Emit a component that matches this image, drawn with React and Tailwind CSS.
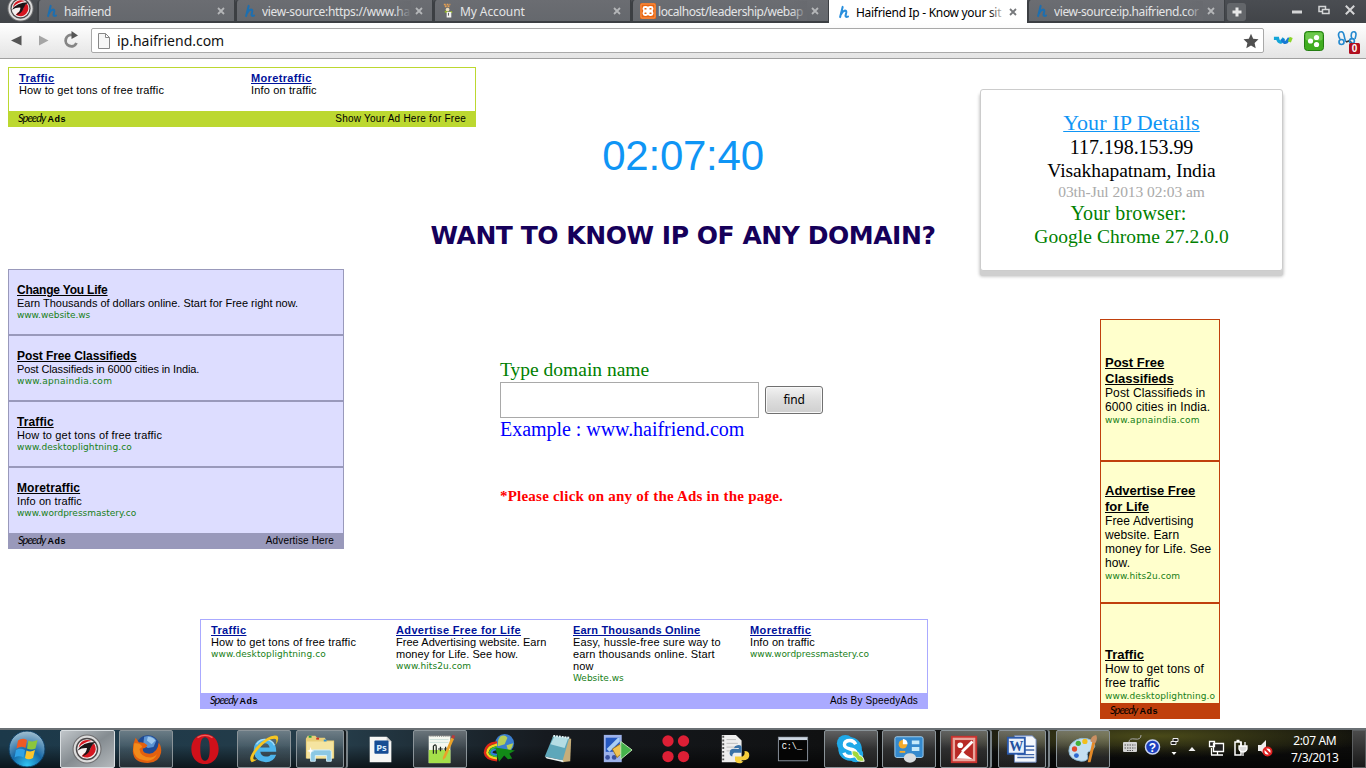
import React from "react";

const H = ({ c = "#1d6fb0" }) => (
  <svg viewBox="0 0 14 14" className="h-[14px] w-[13px] shrink-0" fill="none" stroke={c} strokeWidth="2.200" strokeLinecap="round">
    <path d="M5 1.500 2.300 12.500M3.300 9.500C5 5.500 9.500 4 8.900 7.500L8.100 11Q8.100 12.800 10.800 12" />
  </svg>
);
const Juggler = () => (
  <svg viewBox="0 0 14 16" className="h-4 w-[13px] shrink-0">
    <path d="M2 1h7M3 3h6" stroke="#e8a050" strokeWidth="1.800" strokeDasharray="2 1" />
    <circle cx="6" cy="6.500" r="2" fill="#e9dcbc" />
    <path d="M3 8.500 7 10l4-1" stroke="#95b52a" strokeWidth="2" fill="none" />
    <path d="M5 9h5v6H5z" fill="#f2f2ef" />
    <path d="M7 10v3" stroke="#555" />
  </svg>
);
const Xampp = () => (
  <svg viewBox="0 0 16 16" className="h-4 w-4 shrink-0">
    <rect width="16" height="16" rx="1.500" fill="#e86410" />
    <rect x="1" y="1" width="14" height="14" rx="1" fill="none" stroke="#f79a55" />
    <g fill="none" stroke="#fff" strokeWidth="1.900">
      <rect x="3.500" y="4" width="4" height="3.500" rx="1.500" /><rect x="8.500" y="4" width="4" height="3.500" rx="1.500" />
      <rect x="3.500" y="8.500" width="4" height="3.500" rx="1.500" /><rect x="8.500" y="8.500" width="4" height="3.500" rx="1.500" />
    </g>
    <path d="M6.500 8h3" stroke="#fff" strokeWidth="2" />
  </svg>
);

const Cross = ({ c = "#b4b6b8" }) => (
  <svg viewBox="0 0 8 8" className="h-2 w-2 shrink-0" stroke={c} strokeWidth="1.800">
    <path d="M1 1l6 6M7 1 1 7" />
  </svg>
);

function Tab({ icon, label, active, fade, ls = "tracking-[-0.1px]" }) {
  return (
    <div
      className={
        active
          ? "flex h-[23px] w-[198px] items-center border-l-2 border-white bg-white pl-[7px] pr-[10px] text-black"
          : "flex h-[23px] w-[198px] items-center rounded-tl-sm border-b-2 border-l-2 border-r border-[#3c3f43] bg-gradient-to-b from-[#6b6d72] to-[#65686d] pl-[7px] pr-[9px] text-[#e4e5e6]"
      }
    >
      <div className="flex w-[18px] shrink-0 items-center pt-px">{icon}</div>
      <div className={"relative min-w-0 flex-1 overflow-hidden whitespace-nowrap pt-[2px] text-[12px] leading-[18px] " + ls}>
        {label}
        {fade && (
          <div
            className={
              active
                ? "absolute right-0 top-0 h-full w-4 bg-gradient-to-r from-transparent to-white"
                : "absolute right-0 top-0 h-full w-4 bg-gradient-to-r from-transparent to-[#686a6f]"
            }
          />
        )}
      </div>
      <div className="ml-[4px] flex pt-px">
        <Cross c={active ? "#77797c" : "#b4b6b8"} />
      </div>
    </div>
  );
}

const Dragon = ({ cls }) => (
  <svg viewBox="0 0 32 32" className={cls}>
    <circle cx="16" cy="16" r="15.500" fill="#6e6e70" />
    <circle cx="16" cy="16" r="14.300" fill="#dcdcdc" />
    <circle cx="16" cy="16" r="12" fill="#4a4648" />
    <circle cx="16" cy="16" r="10.500" fill="#f4efef" />
    <path d="M23.500 10a9.500 9.500 0 0 1-13 13.500l2-2.500Q20 19 20 13z" fill="#d5151f" />
    <path d="M7 14.500a9.500 9.500 0 0 1 14-7Q13 8 7 14.500z" fill="#d5151f" />
    <path d="M6 17.500Q11 8.500 25.500 8.500 21 11 19.500 16q-2 6-9 8 5-4 5.500-9-5-.5-10 2.500z" fill="#1c1416" />
  </svg>
);

function TabStrip() {
  return (
    <div className="flex h-[23px] bg-gradient-to-b from-[#4a4d52] to-[#414448] font-['Noto_Sans',sans-serif]">
      <div className="flex w-[37px] items-start overflow-hidden pl-[7px]">
        <Dragon cls="-mt-[5px] h-[27px] w-[27px] shrink-0" />
      </div>
      <Tab icon={<H />} label="haifriend" ls="tracking-[-0.45px]" />
      <Tab icon={<H />} label="view-source:https://www.ha" ls="tracking-[-0.33px]" fade />
      <Tab icon={<Juggler />} label="My Account" />
      <Tab icon={<Xampp />} label="localhost/leadership/webap" ls="tracking-[-0.45px]" fade />
      <Tab icon={<H c="#2a8fdc" />} label="Haifriend Ip - Know your sit" ls="tracking-[-0.3px]" active fade />
      <Tab icon={<H />} label="view-source:ip.haifriend.cor" ls="tracking-[-0.4px]" fade />
      <div className="ml-[2px] mt-[3px] flex h-[18px] w-[19px] items-center justify-center rounded-[3px] bg-[#63666a]">
        <svg viewBox="0 0 10 10" className="h-[10px] w-[10px]" stroke="#e8e8e8" strokeWidth="3"><path d="M5 .5v9M.5 5h9" /></svg>
      </div>
      <div className="ml-auto flex h-[20px] items-center gap-[15px] pr-[11px] text-[#cfd0d1]">
        <svg viewBox="0 0 12 10" className="h-[10px] w-[12px]"><path d="M1 7h10" stroke="#d4d5d6" strokeWidth="3" /></svg>
        <svg viewBox="0 0 12 10" className="h-[10px] w-[12px]" fill="none" stroke="#d4d5d6" strokeWidth="1.500">
          <path d="M4 6.500H1v-5h6.500V4" /><path d="M4.500 4.500H11v4H4.500z" />
        </svg>
        <svg viewBox="0 0 10 10" className="h-[10px] w-[10px]" stroke="#d4d5d6" strokeWidth="2"><path d="M.8.8l8.400 8.400M9.200.8.8 9.200" /></svg>
      </div>
    </div>
  );
}

function Toolbar() {
  return (
    <div className="flex h-[36px] items-center border-b border-[#a0a0a0] bg-gradient-to-b from-white to-[#e4e4e4] pr-1">
      <svg viewBox="0 0 91 30" className="h-[30px] w-[91px] shrink-0">
        <path d="M11 14.500 21.500 9.500v10z" fill="#555" />
        <path d="M39 9.500v10l9.500-5z" fill="#a5a5a5" />
        <path d="M72.500 9A5.700 5.700 0 1 0 76.500 17" fill="none" stroke="#858585" strokeWidth="2.800" />
        <path d="M71.500 5v8l6.500-3.500z" fill="#555" />
      </svg>
      <div className="flex h-[25px] w-[1173px] items-center rounded-[2px] border border-[#a9a9a9] bg-white pl-[6px] pr-[4px]">
        <svg viewBox="0 0 12 16" className="h-4 w-3 shrink-0" fill="#f6f6f6" stroke="#888">
          <path d="M.5.500h7l4 4v11H.5zM7.500.500v4h4" />
        </svg>
        <div className="ml-[7px] flex-1 font-['Noto_Sans',sans-serif] text-[14px] leading-5 tracking-[-0.020px] text-[#111]">ip.haifriend.com</div>
        <svg viewBox="0 0 16 16" className="h-4 w-4" fill="#505050">
          <path d="M8 .8l2.200 4.900 5.300.6-3.900 3.600 1.100 5.300L8 12.500l-4.700 2.700 1.100-5.300L.5 6.300l5.300-.6z" />
        </svg>
      </div>
      <svg viewBox="0 0 22 12" className="ml-[9px] h-3 w-5" fill="none" strokeWidth="3.600">
        <path d="M1 3h4q1 5 4 4l3-4" stroke="#14a5d8" /><path d="M10 4q2 5 5 3l3-4" stroke="#1778d4" /><path d="M18 7l2-5" stroke="#8bd628" />
      </svg>
      <svg viewBox="0 0 20 20" className="ml-[11px] h-5 w-5">
        <rect x=".5" y=".5" width="19" height="19" rx="3" fill="#40ad20" stroke="#237d11" />
        <rect x="1.500" y="1.500" width="17" height="8" rx="2" fill="#6cc84c" />
        <circle cx="6.500" cy="10" r="2.600" fill="#fff" /><circle cx="12.500" cy="6.500" r="2.600" fill="#fff" /><circle cx="12.500" cy="13.500" r="2.600" fill="#fff" />
      </svg>
      <svg viewBox="0 0 24 24" className="ml-[12px] mt-[3px] h-6 w-6 shrink-0">
        <g fill="none" stroke="#2489cf" strokeWidth="1.600">
          <path d="M4 9C1 4 3 1.500 5.500 1.700 9 2 7 6 10 12M16 9c-2-5 0-7.500 2-7.300C21 2 20 6 19 9" />
          <circle cx="5.500" cy="12" r="2.500" /><path d="M10 12l3-1 3 2" stroke="#333" /><circle cx="16" cy="11" r="2.400" />
        </g>
        <rect x="13" y="13" width="11" height="11" rx="1.500" fill="#b10e1e" />
        <text x="18.500" y="22" textAnchor="middle" fontSize="10" fontWeight="bold" fill="#fff" fontFamily="Liberation Sans">0</text>
      </svg>
    </div>
  );
}

const SpeedyLogo = () => (
  <div className="flex items-baseline text-black">
    <span className="font-['Lato',sans-serif] text-[11px] italic leading-[14px] tracking-[-0.9px]">Speedy</span>
    <span className="ml-[2px] font-['Liberation_Sans',sans-serif] text-[9px] font-black leading-[14px] tracking-[0.5px]">Ads</span>
  </div>
);

const Url = ({ children, ls = "" }) => (
  <div className={"whitespace-nowrap font-['DejaVu_Sans',sans-serif] text-[9px] leading-[12px] text-[#178017] " + ls}>{children}</div>
);

function TopAd() {
  return (
    <div className="flex h-[60px] w-[468px] flex-col border border-[#bcd830] bg-white text-[11px] leading-[12px]">
      <div className="flex flex-1 pl-[10px] pt-[4px]">
        <div className="w-[232px]">
          <div className="font-bold text-[#00129b] underline tracking-[0.35px]">Traffic</div>
          <div className="tracking-[0.15px]">How to get tons of free traffic</div>
        </div>
        <div>
          <div className="font-bold text-[#00129b] underline tracking-[0.35px]">Moretraffic</div>
          <div className="tracking-[0.15px]">Info on traffic</div>
        </div>
      </div>
      <div className="flex h-[15px] items-center justify-between bg-[#bcd830] pl-[9px] pr-[9px] text-[10px]">
        <SpeedyLogo />
        <span className="tracking-[0.24px]">Show Your Ad Here for Free</span>
      </div>
    </div>
  );
}

const leftAds = [
  ["Change You Life", "tracking-[-0.2px]", "Earn Thousands of dollars online. Start for Free right now.", "tracking-[-0.010px]", "www.website.ws", "tracking-[-0.050px]"],
  ["Post Free Classifieds", "tracking-[-0.080px]", "Post Classifieds in 6000 cities in India.", "tracking-[-0.12px]", "www.apnaindia.com", "tracking-[0.27px]"],
  ["Traffic", "tracking-[0.1px]", "How to get tons of free traffic", "tracking-[0.15px]", "www.desktoplightning.co", "tracking-[0.080px]"],
  ["Moretraffic", "tracking-[0.1px]", "Info on traffic", "tracking-[0.1px]", "www.wordpressmastery.co", "tracking-[-0.010px]"],
];

function LeftAd() {
  return (
    <div className="flex h-[280px] w-[336px] flex-col border border-[#9999bb] bg-[#ddddff]">
      {leftAds.map(([t, tl, b, bl, u, ul], i) => (
        <div key={t} className={i < 3 ? "h-[66px] border-b-2 border-[#9999bb] pl-2 pt-[13px]" : "flex-1 pl-2 pt-[13px]"}>
          <div className={"text-[12px] font-bold leading-[14px] underline " + tl}>{t}</div>
          <div className={"text-[11px] leading-[12px] " + bl}>{b}</div>
          <Url ls={ul}>{u}</Url>
        </div>
      ))}
      <div className="flex h-[15px] items-center justify-between bg-[#9999bb] pl-[9px] pr-[9px] text-[10px]">
        <SpeedyLogo />
        <span className="tracking-[0.15px]">Advertise Here</span>
      </div>
    </div>
  );
}

const bottomAds = [
  ["w-[185px]", "Traffic", "tracking-[0.35px]", ["How to get tons of free traffic"], "tracking-[0.15px]", "www.desktoplightning.co", "tracking-[0.080px]"],
  ["w-[177px]", "Advertise Free for Life", "tracking-[0.36px]", ["Free Advertising website. Earn", "money for Life. See how."], "tracking-[0.040px]", "www.hits2u.com", "tracking-[0.080px]"],
  ["w-[177px]", "Earn Thousands Online", "tracking-[0.18px]", ["Easy, hussle-free sure way to", "earn thousands online. Start", "now"], "tracking-[0.15px]", "Website.ws", ""],
  ["w-[170px]", "Moretraffic", "tracking-[0.4px]", ["Info on traffic"], "tracking-[0.1px]", "www.wordpressmastery.co", "tracking-[-0.020px]"],
];

function BottomAd() {
  return (
    <div className="flex h-[90px] w-[728px] flex-col border border-[#aaaaff] bg-white text-[11px] leading-[12px]">
      <div className="flex flex-1 pl-[10px] pt-[4px]">
        {bottomAds.map(([w, t, tl, b, bl, u, ul]) => (
          <div key={t} className={w}>
            <div className={"font-bold text-[#00129b] underline " + tl}>{t}</div>
            {b.map((l) => <div key={l} className={"whitespace-nowrap " + bl}>{l}</div>)}
            <Url ls={ul}>{u}</Url>
          </div>
        ))}
      </div>
      <div className="flex h-[15px] items-center justify-between bg-[#aaaaff] pl-[9px] pr-[9px] text-[10px]">
        <SpeedyLogo />
        <span className="tracking-[0.15px]">Ads By SpeedyAds</span>
      </div>
    </div>
  );
}

const rightAds = [
  ["h-[142px] border-b-2 pt-[35px]", ["Post Free", "Classifieds"], ["Post Classifieds in", "6000 cities in India."], "www.apnaindia.com", "tracking-[0.25px]"],
  ["h-[142px] border-b-2 pt-[21px]", ["Advertise Free", "for Life"], ["Free Advertising", "website. Earn", "money for Life. See", "how."], "www.hits2u.com", "tracking-[0.080px]"],
  ["flex-1 pt-[43px]", ["Traffic"], ["How to get tons of", "free traffic"], "www.desktoplightning.o", "tracking-[0.1px]"],
];

function RightAd() {
  return (
    <div className="flex h-[400px] w-[120px] flex-col border border-[#c0400c] bg-[#ffffcc]">
      {rightAds.map(([c, t, b, u, ul]) => (
        <div key={u} className={"border-[#c0400c] pl-1 " + c}>
          {t.map((l) => <div key={l} className="text-[13px] font-bold leading-4 underline">{l}</div>)}
          <div className="-mt-px">
            {b.map((l) => <div key={l} className="whitespace-nowrap text-[12px] leading-[14px] tracking-[0.12px]">{l}</div>)}
            <Url ls={ul}>{u}</Url>
          </div>
        </div>
      ))}
      <div className="flex h-[15px] items-center bg-[#c0400c] pl-[9px]"><SpeedyLogo /></div>
    </div>
  );
}

function IpCard() {
  return (
    <div className="h-[182px] w-[303px] rounded-[3px] border border-[#cccccc] bg-white pt-[20px] text-center font-['Liberation_Serif',serif] text-[20px] leading-[23px] text-black shadow-[0_5px_0_#cfcfcf,0_5px_3px_1px_#cccccc]">
      <div className="text-[22px] leading-[25px] tracking-[0.1px] text-[#0f95f5] underline decoration-1">Your IP Details</div>
      <div className="pt-px tracking-[-0.050px]">117.198.153.99</div>
      <div className="text-[19.5px] tracking-[-0.080px]">Visakhapatnam, India</div>
      <div className="text-[15.5px] leading-[20px] tracking-[-0.050px] text-[#aaaaaa]">03th-Jul 2013 02:03 am</div>
      <div className="pr-[6px] tracking-[0.15px] text-[#008000]">Your browser:</div>
      <div className="text-[19.5px] tracking-[0.050px] text-[#008000]">Google Chrome 27.2.0.0</div>
    </div>
  );
}

function Page() {
  return (
    <div className="flex h-[669px] overflow-hidden bg-white font-['Liberation_Sans',sans-serif] text-black">
      <div className="w-[970px] shrink-0 pl-2 pt-2">
        <TopAd />
        <div className="flex h-[142px] flex-col items-center pl-[388px]">
          <div className="mt-[5px] text-[42px] leading-[48px] tracking-[-0.25px] text-[#0f95f5]">02:07:40</div>
          <h1 className="mt-[41px] whitespace-nowrap font-['DejaVu_Sans',sans-serif] text-[25px] font-bold leading-[30px] tracking-[-0.46px] text-[#16005a]">WANT TO KNOW IP OF ANY DOMAIN?</h1>
        </div>
        <div className="flex h-[350px]">
          <LeftAd />
          <div className="ml-[156px] pt-[88px] font-['Liberation_Serif',serif] text-[20px] leading-[24px]">
            <div className="pt-px text-[19.5px] leading-[23px] text-[#008000]">Type domain name</div>
            <div className="mt-px flex h-[36px] items-center gap-[6px]">
              <input className="h-[36px] w-[259px] border border-[#a9a9a9] bg-white px-2" />
              <button className="h-[28px] w-[58px] rounded-[3px] border border-[#707070] bg-gradient-to-b from-[#f2f2f2] via-[#dddddd] to-[#cfcfcf] font-['Noto_Sans',sans-serif] text-[12px] leading-5 tracking-[-0.2px] shadow-[inset_0_0_0_1px_#f8f8f8]">find</button>
            </div>
            <div className="-mt-px tracking-[-0.040px] text-[#0000ff]">Example : www.haifriend.com</div>
            <div className="mt-[43px] text-[15px] font-bold tracking-[0.22px] text-[#ff0000]">*Please click on any of the Ads in the page.</div>
          </div>
        </div>
        <div className="pl-[192px]"><BottomAd /></div>
      </div>
      <div className="flex flex-col pl-[10px] pt-[30px]">
        <IpCard />
        <div className="pl-[120px] pt-[48px]"><RightAd /></div>
      </div>
    </div>
  );
}

const S = ({ children }) => <svg viewBox="0 0 34 34" className="h-[32px] w-[32px]">{children}</svg>;

const apps = [
  { b: "hot", i: <Dragon cls="h-[30px] w-[30px]" /> },
  { b: "on", i: <S>
    <circle cx="19" cy="15" r="12.500" fill="#1f4a94" /><path d="M15 4q8-3 13 4l-3 7-6 1-5-3z" fill="#5b93d2" /><path d="M19 4q5 0 8 4l-4 4-5-4z" fill="#9cc6ec" />
    <path d="M3.500 12 6 5l3.500 5q5-1 9 3-2 3.500-5 3.500 0 5.500 7 5.500 9-1 10-12 3.500 5 2.500 11-2 10.500-14 11Q4 32 3 20z" fill="#e2600f" />
    <path d="M4.500 11q7-1 8.500 4l-3 2q1 9 12 9 5-1 7-4-4 9-14 7Q5 28 3.500 18z" fill="#f28a1a" /></S> },
  { b: "", i: <S><path fillRule="evenodd" fill="#d0101a" d="M17 1C8 1 2.500 8 2.500 17S8 33 17 33s14.500-7 14.500-16S26 1 17 1zm0 3.500c4 0 5 6 5 12.500s-1 12.500-5 12.500-5-6-5-12.500 1-12.500 5-12.500z" /><path d="M9 5q8-5 16 0" stroke="#f0605c" strokeWidth="1.500" fill="none" /></S> },
  { b: "on", i: <S>
    <path fillRule="evenodd" d="M30 20H13q1 5 6 5 4 0 5-2h6q-3 8-11 8Q6 30 6 18 7 6 18 6q12 1 12 14zM13 15.500h10q-1-4.500-5-4.500t-5 4.500z" fill="#4db5ec" /><path d="M9 12q4-6 11-5 6 1 8 6" stroke="#a5dcf8" strokeWidth="1.500" fill="none" />
    <path d="M4 31Q-1 27 9 15 22 1 31 3q3 3-2 10 3-7-1-7-7 0-16 10-8 9-6 12 1 1 4 0-4 3-6 3z" fill="#f6c522" /></S> },
  { b: "stack", i: <S>
    <path d="M2 6 4 3h8l2 2h8l2 3h8v19H2z" fill="#e9cf78" /><path d="M3 9h28v18H3z" fill="#f5e4a0" /><path d="M5 4h3" stroke="#20a040" strokeWidth="2" /><path d="M13 6h3" stroke="#d03020" strokeWidth="2" /><path d="M21 8h3" stroke="#3090d0" strokeWidth="2" />
    <path d="M7 30V20q0-2 2-2h18q2 0 2 2v10h-5v-6H12v6z" fill="#8cc8e4" stroke="#d8f0fa" /><path d="M7 15l1 3 3 1-3 1-1 3-1-3-3-1 3-1z" fill="#fff" /></S> },
  { b: "", i: <S>
    <path d="M5 4h18l5 5v22H5z" fill="#f7f7f5" /><path d="M23 4v5h5" fill="#c9c9c9" /><rect x="10" y="8" width="15" height="14" rx="1" fill="#174d94" />
    <text x="17.500" y="19" fontSize="10" fill="#d9ecff" textAnchor="middle" fontFamily="Noto Sans" fontWeight="bold">Ps</text></S> },
  { b: "on", i: <S>
    <path d="M5 3h23v29H5z" fill="#f5f8f0" /><path d="M5 18h23v14H5z" fill="#a5e04a" /><path d="M6 3h21" stroke="#777" strokeWidth="2" strokeDasharray="1 1" /><path d="M6 7h20M6 10h20" stroke="#c9dfd9" />
    <path d="M10 22v-8q3-3 3 1v7M15 17h5M17.500 14.500v5M21 17h4M23 14.500v5" stroke="#202820" strokeWidth="1.300" fill="none" /><path d="M20 26 29 5l3 1-9 20-3 3z" fill="#eaa22a" /><path d="M29 5l1-3 3 1-1 3z" fill="#b83a3a" /></S> },
  { b: "", i: <S>
    <circle cx="23" cy="11" r="10" fill="#3b7fd0" /><path d="M18 4q5-3 8 1l-3 7-7 2q-1-6 2-10zM25 13l7-2q-1 6-5 9z" fill="#b7cf58" />
    <path d="M15 10Q3 11 2 21q1 7 13 8" stroke="#e02818" strokeWidth="2.500" fill="none" /><path d="M15 12.500Q5 14 4.500 21q1 5 10.500 6" stroke="#f2d51e" strokeWidth="2.500" fill="none" /><path d="M15 15q-7 1-8 6 1 3 8 4" stroke="#2fbe4a" strokeWidth="2" fill="none" /><path d="M15 17q-6 1-6 4 1 2 6 2" stroke="#2f7de0" strokeWidth="2" fill="none" />
    <path d="M13 15.500 34 18.500l-6 3.500 3 5-4.500 1-4-4-5.500 6.500z" fill="#128a17" /></S> },
  { b: "", i: <S>
    <path d="M11 4 31 6l-1 24-9 1z" fill="#c6ae7a" /><path d="M12 3l17 2-7 24-19-4z" fill="#5ea7ba" /><path d="M13 4l15 1-4 11-15-4z" fill="#b5dde4" /><path d="M3 25l19 4 1 2-18-4z" fill="#e8f2f2" /><path d="M12 3l17 2" stroke="#e6f4f6" strokeWidth="2" strokeDasharray="2 1" /></S> },
  { b: "", i: <S>
    <rect x="3" y="2" width="19" height="29" fill="#9db2ea" /><rect x="5" y="5" width="15" height="15" fill="#2558c0" /><path d="M6 17 18 5h2v4L9 20z" fill="#a9cdf4" /><circle cx="7" cy="26" r="2.500" fill="#3951a0" /><circle cx="14" cy="26" r="2.500" fill="#3951a0" />
    <path d="M12 17l8-5 4 8-7 6z" fill="#efc251" stroke="#9a7422" /><path d="M21 9l12 9-12 10z" fill="#45b34b" stroke="#c2e9b8" /></S> },
  { b: "", i: <S><g fill="#dd1f35"><circle cx="8.500" cy="8.500" r="6" /><circle cx="25" cy="8.500" r="6" /><circle cx="8.500" cy="25" r="6" /><circle cx="25" cy="25" r="6" /></g></S> },
  { b: "", i: <S>
    <path d="M3 2h15l6 6v23H3z" fill="#eee" /><path d="M4.500 3v27" stroke="#555" strokeWidth="2" strokeDasharray="2 2" /><path d="M8 7h10M8 11h12M8 15h12M8 19h6" stroke="#bbb" />
    <path d="M17 14q6-3 7 1v6h-8q-2 1-2 4-4-1-2-7 2-2 8-1h1v-1h-5z" fill="#3a72a8" /><path d="M24 32q-6 1-7-3v-4h8q3-1 2-6 6 0 5 6-1 4-6 4h-3v1h3z" fill="#f7cf3c" /></S> },
  { b: "", i: <S><rect x="1.500" y="4.500" width="31" height="25" fill="#050505" stroke="#8d95a0" /><path d="M2 6h30" stroke="#cdd6e2" strokeWidth="3" /><text x="5" y="17" fontSize="9" fill="#fff" fontFamily="Liberation Mono">C:\_</text></S> },
  { b: "on", i: <S>
    <circle cx="11" cy="11" r="9" fill="#1fa9e8" /><circle cx="16" cy="17" r="12.500" fill="#1fa9e8" /><circle cx="22" cy="23" r="8" fill="#1fa9e8" />
    <path d="M22 12q-2-4-6-4-6 0-6 4.500 0 3 6 4.500 6 1 6 4 0 4-6 4-5 0-6.500-4" stroke="#fff" strokeWidth="3.600" fill="none" /><path d="M18 19q7-1 8 5 4 0 5 6-8 1-9-4-4-1-4-7z" fill="#a2d93c" stroke="#fff" /></S> },
  { b: "on", i: <S>
    <rect x="2" y="4" width="30" height="22" rx="2" fill="#3489cd" stroke="#a6d2f1" /><circle cx="10.500" cy="12" r="4.500" fill="#f4aa2a" /><path d="M10.500 12V6a6 6 0 0 1 5 6z" fill="#fff" /><path d="M20 10h8M20 17h8" stroke="#c6eafa" strokeWidth="4" /><path d="M7 20h6" stroke="#f4aa2a" strokeWidth="2" /><ellipse cx="18" cy="26.500" rx="6.500" ry="5" fill="#d8dcdf" /></S> },
  { b: "stack", i: <S>
    <path d="M3 3h28v29H3z" fill="#c83430" /><path d="M5 5h24v25H5z" fill="#e9a59b" /><path d="M7.500 7.500h19v20h-19z" fill="#b82a26" /><path d="M9 27l6-8 4 4 7 4.500z" fill="#fff" /><circle cx="13" cy="13" r="3" fill="#fff" /><path d="M15 20 26 9" stroke="#fff" strokeWidth="3" /></S> },
  { b: "stack", i: <S>
    <path d="M9 3h19l4 4v24H9z" fill="#f5f8fd" stroke="#6783bb" /><path d="M20 14h10M20 18h10M12 23h18M12 26h18" stroke="#4167ab" strokeWidth="1.500" /><rect x="2" y="5" width="18" height="17" fill="#e9f1fc" stroke="#2a59ac" strokeWidth="2" />
    <text x="11" y="19" textAnchor="middle" fontSize="15" fontWeight="bold" fill="#23519f" fontFamily="Liberation Serif">W</text></S> },
  { b: "on", i: <S>
    <path d="M5 11Q14 2 27 8q6 7-2 11-5 1-3 6 1 5-7 5Q2 28 2 19q0-5 3-8z" fill="#c5dff0" stroke="#8cb6d2" /><circle cx="8" cy="17" r="2.800" fill="#e24a2c" /><circle cx="12" cy="11" r="2.800" fill="#45b13a" /><circle cx="19" cy="9" r="2.800" fill="#f3bf1d" /><circle cx="10" cy="24" r="2.600" fill="#2c68d0" />
    <path d="M22 31 27 9l3 1-5 21z" fill="#e58a28" /><path d="M25 9q0-6 6-7 2 4-1 9z" fill="#c98f62" /></S> },
];

const btn = {
  "": "flex h-[38px] w-[54px] items-center justify-center",
  hot: "flex h-[38px] w-[55px] items-center justify-center rounded-[2px] border border-[#d8dde0] bg-gradient-to-br from-[#c1c6ca] via-[#858c91] to-[#b4b9bc]",
  on: "flex h-[38px] w-[54px] items-center justify-center rounded-[2px] border border-[#8b9499] bg-gradient-to-b from-[#ffffff55] via-[#ffffff22] to-[#ffffff18]",
  stack: "ml-[2px] flex h-[38px] w-[48px] items-center justify-center rounded-[2px] border border-[#8b9499] bg-gradient-to-b from-[#ffffff55] via-[#ffffff22] to-[#ffffff18] shadow-[2px_0_0_#14181b,4px_0_0_#788186]",
};

function Taskbar() {
  return (
    <div className="flex h-10 items-center border-t-2 border-[#6a7074] bg-[linear-gradient(to_bottom,transparent_40%,#000000a0),radial-gradient(ellipse_230px_22px_at_1155px_6px,#5a5a1ccc,transparent),linear-gradient(to_right,#1c394a,#253c49_25%,#161a1f_40%,#101112_60%,#0c0c0b)] font-['Noto_Sans',sans-serif] text-white">
      <div className="flex w-[57.5px] shrink-0 items-center pl-[8px]">
        <svg viewBox="0 0 38 38" className="h-[38px] w-[38px]">
          <defs><radialGradient id="orb" cx=".5" cy=".95" r=".95"><stop offset="0" stopColor="#30c6f4" /><stop offset=".45" stopColor="#1668a6" /><stop offset="1" stopColor="#a4c0d0" /></radialGradient></defs>
          <circle cx="19" cy="19" r="18" fill="url(#orb)" stroke="#0c3d63" />
          <path d="M10 10.500q4.500-3 9-.5l-1.500 8q-4.500-2.500-9 .5z" fill="#ee5a24" /><path d="M20.500 10.500q4 2 9-.5l-2 8.500q-4.500 2-8.500 0z" fill="#8cc63c" />
          <path d="M8 20q4.500-2.500 9 0l-1.500 7.500q-4.500-2.500-9 0z" fill="#2fa2e6" /><path d="M18.500 20.500q4 2 8.500-.5l-2 8q-4.500 2.500-8 0z" fill="#fbc52c" />
        </svg>
      </div>
      <div className="grid w-[1054px] shrink-0 grid-cols-[repeat(4,59px)_58px_repeat(6,59px)_repeat(7,58px)]">
        {apps.map((a, k) => (
          <div key={k} className={a.b === "stack" ? "flex" : "flex justify-center"}><div className={btn[a.b]}>{a.i}</div></div>
        ))}
      </div>
      <svg viewBox="0 0 168 38" className="h-[38px] w-[168px] shrink-0">
        <path d="M17 12q0-4 6-3t6-4" stroke="#aaa" fill="none" /><rect x="11" y="12" width="14" height="10" rx="1" fill="#d4d4d4" /><path d="M12.500 15h11M12.500 18h11M15 20.500h6" stroke="#555" strokeDasharray="1.500 1" />
        <circle cx="40.500" cy="17" r="7" fill="#1c3fc0" stroke="#c8d4f4" strokeWidth="1.500" /><text x="40.500" y="21.500" textAnchor="middle" fontSize="12" fontWeight="bold" fill="#fff" fontFamily="Liberation Sans">?</text>
        <path d="M61 8.500h5v3h-5zM59 11.500h5v3h-5z" stroke="#eee" fill="#222" /><path d="M59.500 22h5l-2.500 3z" fill="#fff" />
        <path d="M76.500 21h7L80 17z" fill="#eee" />
        <path d="M101.500 13.500h10v8h-10zM99 25h12M105.500 22v3M99.500 18v7M97.500 11.500h5v5h-5z" stroke="#fff" strokeWidth="1.300" fill="#222" />
        <path d="M123 12h6v13h-6zM124.500 10.500h3" stroke="#fff" strokeWidth="1.500" fill="none" /><path d="M127 16h8v3q-1 3-4 3t-4-3zM129 12v4M133 12v4M131 22v4" stroke="#fff" fill="#ddd" strokeWidth="1.300" />
        <path d="M146 15h3l5-5v16l-5-5h-3z" fill="#eee" /><circle cx="155.500" cy="21.500" r="4" fill="#fff" stroke="#e02020" strokeWidth="2" /><path d="M153 19l5 5" stroke="#e02020" strokeWidth="2" />
      </svg>
      <div className="flex-1 pr-[2px] text-center text-[12px] leading-[17px] tracking-[-0.35px]">
        <div>2:07 AM</div>
        <div>7/3/2013</div>
      </div>
      <div className="h-[38px] w-[14px] border border-[#5b5e60] bg-gradient-to-b from-[#4b4b4b] to-[#191919]" />
    </div>
  );
}

export default function App() {
  return (
    <div className="h-[768px] w-[1366px] overflow-hidden bg-white">
      <TabStrip />
      <Toolbar />
      <Page />
      <Taskbar />
    </div>
  );
}
